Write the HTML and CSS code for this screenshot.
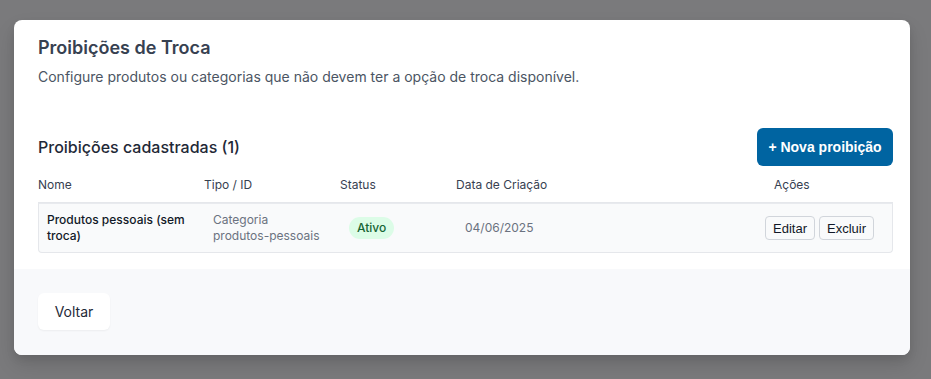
FILE: index.html
```html
<!DOCTYPE html>
<html lang="pt-BR">
<head>
<meta charset="utf-8">
<title>Proibições de Troca</title>
<link rel="stylesheet" href="styles.css">
</head>
<body>
<div class="overlay">
  <div class="modal">
    <div class="modal-body">
      <h2 class="title">Proibições de Troca</h2>
      <p class="subtitle">Configure produtos ou categorias que não devem ter a opção de troca disponível.</p>

      <div class="list-head">
        <h3 class="list-title">Proibições cadastradas (1)</h3>
        <button class="btn-primary">+ Nova proibição</button>
      </div>

      <div class="table">
        <div class="thead">
          <div>Nome</div>
          <div>Tipo / ID</div>
          <div>Status</div>
          <div>Data de Criação</div>
          <div>Ações</div>
        </div>
        <div class="trow">
          <div class="name">Produtos pessoais (sem troca)</div>
          <div class="type">Categoria<br>produtos-pessoais</div>
          <div><span class="badge">Ativo</span></div>
          <div class="date">04/06/2025</div>
          <div class="actions">
            <button class="btn-sm">Editar</button>
            <button class="btn-sm">Excluir</button>
          </div>
        </div>
      </div>
    </div>
    <div class="modal-footer">
      <button class="btn-back">Voltar</button>
    </div>
  </div>
</div>
</body>
</html>
```

FILE: styles.css
```css
* { box-sizing: border-box; }
html, body { margin: 0; padding: 0; }
body {
  font-family: Inter, "Noto Sans", sans-serif;
  background: #7a7a7c;
  width: 931px;
  height: 379px;
  overflow: hidden;
}
.overlay {
  padding: 20px 21px 0 14px;
}
.modal {
  width: 896px;
  height: 335px;
  background: #ffffff;
  border-radius: 8px;
  overflow: hidden;
  box-shadow: 0 10px 20px rgba(0,0,0,0.12), 0 4px 8px rgba(0,0,0,0.08);
  display: flex;
  flex-direction: column;
}
.modal-body {
  padding: 16px 17px 16px 24px;
}
.title {
  margin: 0;
  font-size: 18px;
  line-height: 24px;
  font-weight: 600;
  color: #374151;
}
.subtitle {
  margin: 7px 0 0;
  font-size: 14px;
  line-height: 20px;
  color: #4b5563;
}
.list-head {
  margin-top: 41px;
  display: flex;
  align-items: center;
  justify-content: space-between;
}
.list-title {
  margin: 0;
  font-size: 16px;
  font-weight: 500;
  color: #1f2937;
}
.btn-primary {
  height: 38px;
  width: 136px;
  border: 0;
  border-radius: 6px;
  background: #0064a1;
  color: #fff;
  font-family: "Liberation Sans", Arial, sans-serif;
  font-weight: 700;
  font-size: 14px;
  padding: 0;
}
.table { margin-top: 10px; }
.thead, .trow {
  display: grid;
  grid-template-columns: 166px 136px 116px 1fr 119px;
  align-items: center;
}
.thead {
  font-size: 12px;
  line-height: 18px;
  color: #374151;
  font-weight: 400;
  padding-bottom: 8px;
  border-bottom: 1px solid #e5e7eb;
}
.trow {
  background: #f9fafb;
  border: 1px solid #e5e7eb;
  border-top-color: #e8eaee;
  border-radius: 0 0 4px 4px;
  padding: 8px;
  font-size: 12px;
  line-height: 16px;
  min-height: 49px;
}
.name { font-weight: 500; color: #111827; padding-right: 12px; }
.type { color: #6b7280; }
.date { color: #6b7280; }
.badge {
  display: inline-block;
  background: #dcfce7;
  color: #166534;
  border-radius: 11px;
  padding: 3px 8px;
  line-height: 16px;
  font-weight: 500;
}
.actions { display: flex; gap: 4px; }
.btn-sm {
  height: 24px;
  padding: 0 7px;
  border: 1px solid #d1d5db;
  border-radius: 4px;
  background: #f9fafb;
  font-family: "Liberation Sans", Arial, sans-serif;
  font-size: 13px;
  color: #111827;
}
.modal-footer {
  flex: 1;
  background: #f8f9fb;
  padding: 24px 24px;
}
.btn-back {
  height: 37px;
  width: 72px;
  border: 0;
  border-radius: 6px;
  background: #fff;
  box-shadow: 0 1px 2px rgba(0,0,0,0.05);
  font-family: Inter, sans-serif;
  font-size: 14px;
  font-weight: 400;
  color: #1f2937;
}
```
